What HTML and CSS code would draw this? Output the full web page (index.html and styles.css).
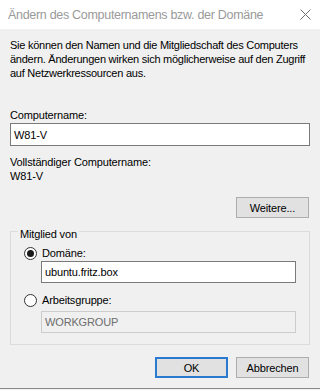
FILE: index.html
```html
<!DOCTYPE html>
<html lang="de">
<head>
<meta charset="utf-8">
<title>Ändern des Computernamens</title>
<link rel="stylesheet" href="styles.css">
</head>
<body>
<div class="window">
  <div class="titlebar">
    <span class="title">Ändern des Computernamens bzw. der Domäne</span>
    <svg class="close" width="11" height="11" viewBox="0 0 11 11"><path d="M0.5 0.5L10.5 10.5M10.5 0.5L0.5 10.5" stroke="#707070" stroke-width="1" fill="none"/></svg>
  </div>
  <div class="content">
    <p class="desc">Sie können den Namen und die Mitgliedschaft des Computers ändern. Änderungen wirken sich möglicherweise auf den Zugriff auf Netzwerkressourcen aus.</p>
    <div class="label lbl-name">Computername:</div>
    <div class="input">W81-V</div>
    <div class="label lbl-full">Vollständiger Computername:</div>
    <div class="label">W81-V</div>
    <div class="btnrow first">
      <button class="btn">Weitere...</button>
    </div>
    <fieldset class="group">
      <legend>Mitglied von</legend>
      <div class="radio-row">
        <span class="radio checked"></span><span>Domäne:</span>
      </div>
      <div class="input inner">ubuntu.fritz.box</div>
      <div class="radio-row second">
        <span class="radio"></span><span>Arbeitsgruppe:</span>
      </div>
      <div class="input inner disabled">WORKGROUP</div>
    </fieldset>
    <div class="btnrow last">
      <button class="btn default">OK</button>
      <button class="btn">Abbrechen</button>
    </div>
  </div>
</div>
</body>
</html>
```
FILE: styles.css
```css
html, body {
  margin: 0;
  padding: 0;
}
body {
  width: 320px;
  height: 390px;
  overflow: hidden;
  background: #f0f0f0;
  font-family: "Liberation Sans", Arial, sans-serif;
  font-size: 11px;
  letter-spacing: -0.15px;
  color: #000;
}
.window {
  height: 388px;
  border-bottom: 1px solid #8a8a8a;
  background: #f0f0f0;
}
.titlebar {
  height: 29px;
  background: #fff;
  display: flex;
  align-items: center;
  justify-content: space-between;
  padding: 0 9px 0 8px;
}
.title {
  font-family: "Liberation Sans", Arial, sans-serif;
  font-size: 12.5px;
  color: #9a9a9a;
  letter-spacing: -0.3px;
}
.close {
  display: block;
}
.content {
  padding: 9px 10px 0 10px;
  display: flex;
  flex-direction: column;
}
.desc {
  margin: 0;
  line-height: 14px;
  letter-spacing: -0.25px;
}
.label {
  line-height: 14px;
}
.lbl-name {
  margin-top: 28px;
  margin-bottom: 1px;
}
.lbl-full {
  margin-top: 9px;
}
.input {
  height: 21px;
  border: 1px solid #7a7a7a;
  background: #fff;
  display: flex;
  align-items: center;
  padding-left: 3px;
}
.btnrow {
  display: flex;
  justify-content: flex-end;
  gap: 8px;
  padding-right: 1px;
}
.btnrow.first {
  margin-top: 14px;
}
.btnrow.last {
  margin-top: 12px;
}
.btn {
  box-sizing: border-box;
  width: 73px;
  height: 21px;
  margin: 0;
  padding: 0;
  background: #e1e1e1;
  border: 1px solid #adadad;
  font-family: inherit;
  font-size: 11px;
  letter-spacing: -0.15px;
  color: #000;
}
.btn.default {
  border: 2px solid #2a7ad0;
}
.group {
  margin: 3px 0 0 0;
  padding: 0 13px 11px 13px;
  border: 1px solid #dcdcdc;
  min-width: 0;
}
.group legend {
  margin-left: -6px;
  padding: 6px 2px 0 2px;
  line-height: 14px;
}
.radio-row {
  display: flex;
  align-items: center;
  gap: 5px;
  line-height: 14px;
  margin-top: 5px;
  margin-bottom: 1px;
}
.radio-row.second {
  margin-top: 10px;
  margin-bottom: 4px;
}
.radio {
  width: 11px;
  height: 11px;
  border: 1px solid #333;
  border-radius: 50%;
  background: #fff;
  display: flex;
  align-items: center;
  justify-content: center;
}
.radio.checked::after {
  content: "";
  width: 7px;
  height: 7px;
  border-radius: 50%;
  background: #1a1a1a;
}
.input.inner {
  margin-left: 17px;
  height: 20px;
}
.input.disabled {
  background: #f0f0f0;
  border-color: #cccccc;
  color: #6d6d6d;
}
```
